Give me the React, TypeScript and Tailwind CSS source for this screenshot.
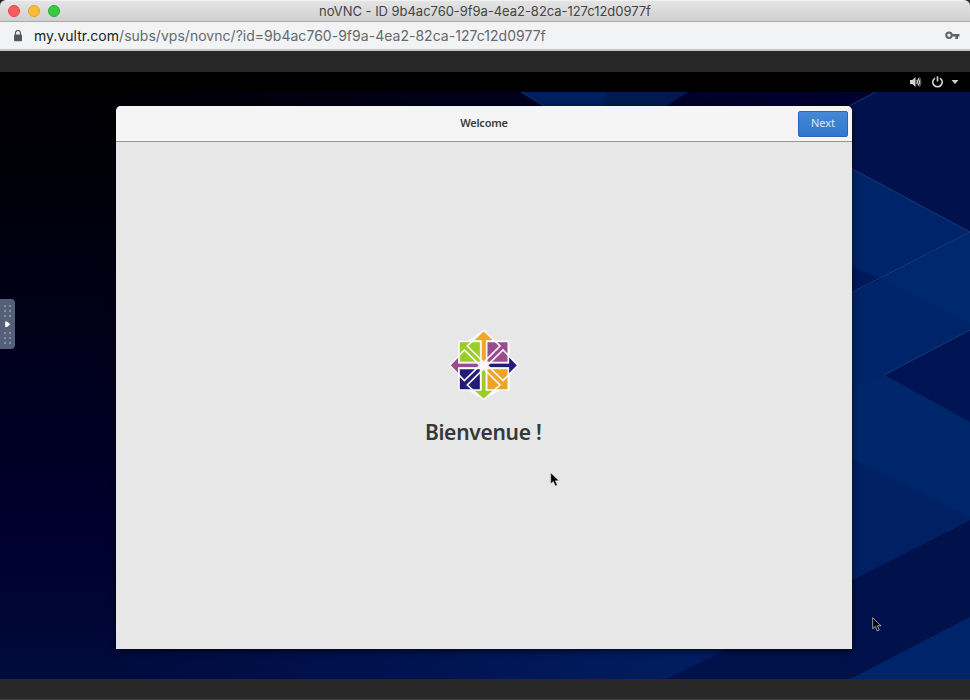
const square = (x: number, y: number, fill: string) => (
  <rect x={x} y={y} width="65" height="65" fill={fill} />
);

function Logo() {
  return (
    <svg className="h-[90px] w-[110px]" viewBox="0 0 330 270">
      <path
        d="M161 30 211 79H240V106L265 136 240 166V211H211L161 240 112 211H86V166L58 136 86 106V63H112Z"
        fill="#f7f8f7"
      />
      {square(87, 64, "#9bcd29")}
      {square(170, 64, "#9b4b91")}
      {square(87, 145, "#251c79")}
      {square(170, 145, "#eca326")}
      <path d="M161 31 192 61H168V127H155V61H130Z" fill="#efa724" />
      <path d="M264 136 237 166V142H173V130H237V106Z" fill="#251c79" />
      <path d="M161 239 130 211H155V147H167V211H192Z" fill="#9bcd29" />
      <path d="M59 136 85 106V130H150V142H85V166Z" fill="#9b4b91" />
      <g fill="none" stroke="#f7f8f7" strokeWidth="5">
        <path d="M87 64H152V128H87Z M170 64H235V128H170Z M87 145H152V210H87Z M170 145H235V210H170Z" />
        <path d="M161 31 210 78 161 127 112 78Z M264 136 219 182 172 136 219 90Z M161 239 112 195 161 146 210 195Z M59 136 103 90 150 136 103 182Z" />
      </g>
      <circle cx="161" cy="136" r="13" fill="#f7f8f7" />
    </svg>
  );
}

function Wallpaper() {
  return (
    <svg className="absolute inset-0 h-[587px] w-[970px]" viewBox="0 92 970 587">
      <defs>
        <linearGradient id="night" x1="0" y1="0" x2="0" y2="1">
          <stop offset="0" stopColor="#000003" />
          <stop offset="0.2" stopColor="#00000c" />
          <stop offset="0.45" stopColor="#00001c" />
          <stop offset="0.75" stopColor="#00002e" />
          <stop offset="1" stopColor="#000b3d" />
        </linearGradient>
        <linearGradient id="foot" gradientUnits="userSpaceOnUse" x1="116" y1="0" x2="670" y2="0">
          <stop offset="0" stopColor="#000b3d" />
          <stop offset="0.5" stopColor="#00124f" />
          <stop offset="1" stopColor="#001d5f" />
        </linearGradient>
        <linearGradient id="head" x1="0" y1="0" x2="1" y2="0">
          <stop offset="0" stopColor="#000005" />
          <stop offset="1" stopColor="#000033" />
        </linearGradient>
      </defs>
      <rect y="92" width="970" height="587" fill="url(#night)" />
      <rect x="116" y="92" width="760" height="30" fill="url(#head)" />
      <path d="M521 92H688L650 116H560Z" fill="#001f5f" />
      <path d="M606 92H688L650 116H596Q606 106 606 92Z" fill="#001a50" />
      <path d="M521 92 560 116" stroke="#063a79" />
      <path d="M845 108 876 92H970V679H845Z" fill="#00114e" />
      <path d="M116 640H740L714 660 667 679H116Z" fill="url(#foot)" />
      <path d="M740 640H970V679H667L714 656Z" fill="#00114a" />
      <path d="M845 165 970 232V546L845 584Z" fill="#002469" />
      <path d="M845 264 882 279 845 296Z" fill="#00195a" />
      <path d="M882 279 970 233V323Z" fill="#002870" />
      <path d="M884 375 970 330V422Z" fill="#001453" />
      <path d="M845 390 884 375 970 422V517L845 455Z" fill="#00276c" />
      <path d="M845 455 970 517 845 584Z" fill="#002064" />
      <path d="M845 584 970 520V617L845 679Z" fill="#00114b" />
      <path d="M850 679 970 617V679Z" fill="#00246a" />
      <path
        d="M845 108 876 92M845 165 970 232 845 296M884 375 970 330"
        fill="none"
        stroke="#174681"
        strokeWidth="0.8"
      />
    </svg>
  );
}

function TitleBar() {
  return (
    <header className="relative flex h-[22px] shrink-0 items-center justify-center rounded-t-md border-t border-b border-t-[#f1f1f1] border-b-[#aaa] bg-linear-to-b from-[#e5e5e5] to-[#d0d0d0]">
      <div className="absolute left-2 flex gap-2">
        <span className="size-3 rounded-full border border-[#e0494a] bg-[#fc5b5c]" />
        <span className="size-3 rounded-full border border-[#dfa12d] bg-[#fdbc35]" />
        <span className="size-3 rounded-full border border-[#2cad33] bg-[#36cb40]" />
      </div>
      <h1 className="text-[13px] leading-5 tracking-[-0.04px] whitespace-nowrap text-[#454545]">noVNC - ID 9b4ac760-9f9a-4ea2-82ca-127c12d0977f</h1>
    </header>
  );
}

function AddressBar() {
  return (
    <div className="flex h-[29px] shrink-0 items-center border-b-2 border-b-[#c4c4c4] bg-[#f1f3f5] pr-[10px] pl-[13px]">
      <svg className="h-3 w-[10px] shrink-0" viewBox="0 0 10 12">
        <path d="M2.5 5V3a2.5 2.5 0 0 1 5 0v2" fill="none" stroke="#55585b" strokeWidth="1.2" />
        <rect x="1" y="4.5" width="8" height="6.7" rx="1" fill="#55585b" />
      </svg>
      <p className="ml-[11px] flex-1 text-sm leading-5 tracking-[0.025px] whitespace-nowrap text-[#66696d]">
        <span className="text-[#202124]">my.vultr.com</span>/subs/vps/novnc/?id=9b4ac760-9f9a-4ea2-82ca-127c12d0977f
      </p>
      <svg className="h-[9px] w-[15px]" viewBox="0 0 15 9">
        <circle cx="4" cy="4.3" r="2.7" fill="none" stroke="#606367" strokeWidth="2" />
        <path d="M7 3h7.5v2.6H13V8h-2.6V5.6H7Z" fill="#606367" />
      </svg>
    </div>
  );
}

function StatusBar() {
  return (
    <div className="flex h-5 shrink-0 items-center justify-end bg-black pr-[11px] text-[#d4d4d4]">
      <svg className="h-3 w-3" viewBox="0 0 12 12" fill="none" stroke="currentColor">
        <path d="M0 4H2.3L5.5 1V11L2.3 8H0Z" fill="currentColor" stroke="none" />
        <path d="M6.7 4q1.6 2 0 4M8 2.5q3 3.5 0 7" strokeWidth="1.3" />
        <path d="M9.6 1.2q3 4.8 0 9.6" stroke="#777" />
      </svg>
      <svg className="mr-px ml-[10px] h-3 w-3" viewBox="0 0 12 12" fill="none" stroke="currentColor" strokeWidth="1.6">
        <path d="M3 2.1a4.7 4.7 0 1 0 5 0M5.5 .3V5.5" />
      </svg>
      <svg className="ml-[6px] h-1 w-2" viewBox="0 0 8 4">
        <path d="M.5 0h7L4 4Z" fill="currentColor" />
      </svg>
    </div>
  );
}

function Pointer({ light = false }: { light?: boolean }) {
  return (
    <svg className="h-[15px] w-[10px]" viewBox="0 0 10 15">
      <path
        d="M.7.7V11.8L3.3 9.4 5.2 14 7.3 13 5.4 8.8H9Z"
        fill="#080808"
        stroke={light ? "#bcc0c4" : "#eeeeee"}
        strokeWidth={light ? 0.8 : 0.5}
      />
    </svg>
  );
}

function ControlHandle() {
  const dots = (
    <div className="grid grid-cols-2 gap-[3px]">
      {Array.from({ length: 6 }, (_, i) => <i key={i} className="size-0.5 bg-[#8290a5]" />)}
    </div>
  );
  return (
    <div className="absolute top-[207px] left-0 flex h-[50px] w-[15px] flex-col items-center justify-center gap-[4px] rounded-r-[4px] bg-[#536077]">
      {dots}
      <svg className="h-[7px] w-[6px]" viewBox="0 0 6 7"><path d="M.2.5H2L5.3 3.2 2 6H.2Z" fill="white" /></svg>
      {dots}
    </div>
  );
}

function WelcomeDialog() {
  return (
    <section className="relative mt-[14px] ml-[116px] flex h-[543px] w-[736.4px] flex-col overflow-hidden rounded-t-[5px] bg-[#e7e7e7] shadow-[0_2px_7px_#000000aa]">
      <div className="grid h-9 shrink-0 grid-cols-[1fr_auto_1fr] items-center border-b border-[#999592] bg-[#f5f5f5] pr-[4.4px] pl-1">
        <span />
        <h2 className="-mt-px font-['Noto_Sans',sans-serif] text-[11px] leading-4 font-semibold tracking-[-0.2px] text-[#383c3e]">Welcome</h2>
        <button className="h-[26px] w-[50px] justify-self-end rounded-[2px] border border-[#2867b5] bg-linear-to-b from-[#4588d5] to-[#3078cd] font-['Noto_Sans',sans-serif] text-[11px] text-[#dce9fb]">Next</button>
      </div>
      <main className="flex flex-col items-center pt-[178px]">
        <div className="flex pl-[1.6px]"><Logo /></div>
        <h3 className="mt-[7px] pr-0.5 font-['Noto_Sans',sans-serif] text-[21px] leading-[30px] font-semibold tracking-[-0.27px] whitespace-nowrap text-[#343838]">Bienvenue !</h3>
      </main>
      <div className="absolute top-[366px] left-[434px]"><Pointer /></div>
    </section>
  );
}

export default function App() {
  return (
    <div className="flex h-[700px] w-[970px] flex-col overflow-hidden bg-[#282828] font-[Inter,sans-serif]">
      <TitleBar />
      <AddressBar />
      <div className="h-[21px] shrink-0 bg-[#282828]" />
      <StatusBar />
      <div className="relative h-[587px] shrink-0 overflow-hidden">
        <Wallpaper />
        <WelcomeDialog />
        <ControlHandle />
        <div className="absolute top-[525px] left-[872px]"><Pointer light /></div>
      </div>
      <div className="h-[21px] shrink-0 border-b border-[#444] bg-[#282828]" />
    </div>
  );
}
